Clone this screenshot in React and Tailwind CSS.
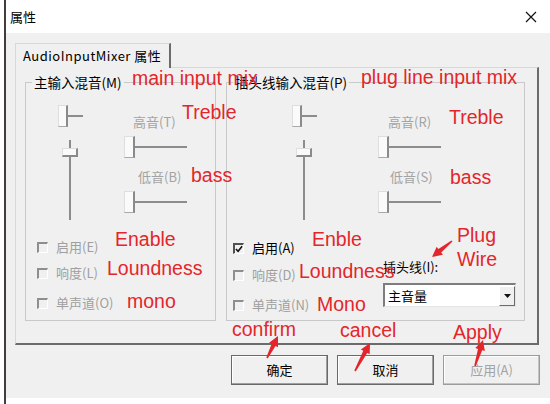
import React from 'react';

const ui = "font-['Noto_Sans_CJK_SC','Liberation_Sans',sans-serif] text-[13px] leading-4";

function SmallSlider() {
  return (
    <div className="flex items-center">
      <div className="w-[10px] h-[22px] bg-[#fafafa] border-l border-t border-[#dedede] border-b border-b-[#a8a8a8] border-r-2 border-r-[#8a8a8a]" />
      <div className="w-[15px] h-[2px] bg-[#8c8c8c]" />
    </div>
  );
}

function VSlider() {
  return (
    <div className="flex flex-col items-center w-[16px]">
      <div className="w-[2px] h-[8px] bg-[#8c8c8c]" />
      <div className="w-[16px] h-[9px] bg-[#fafafa] border-l border-t border-[#dedede] border-b-2 border-b-[#8a8a8a] border-r-2 border-r-[#8a8a8a]" />
      <div className="w-[2px] h-[63px] bg-[#8c8c8c]" />
    </div>
  );
}

function HSlider() {
  return (
    <div className="flex items-center">
      <div className="w-[11px] h-[22px] bg-[#fafafa] border-l border-t border-[#dedede] border-b border-b-[#a8a8a8] border-r-2 border-r-[#8a8a8a]" />
      <div className="w-[52px] h-[2px] bg-[#8c8c8c]" />
    </div>
  );
}

function Check({ label, checked, disabled, className }) {
  return (
    <div className={'flex items-center ' + (className || '')}>
      <div
        className={
          'w-[11px] h-[11px] flex items-center justify-center border-t-2 border-l-2 border-b border-r border-b-white border-r-white ' +
          (disabled ? 'border-t-[#8e8e8e] border-l-[#8e8e8e]' : 'border-t-[#505050] border-l-[#505050]')
        }
      >
        {checked && (
          <svg width="9" height="8" viewBox="0 0 9 8">
            <path d="M1 4 L3.5 6.5 L8 1" fill="none" stroke="#111" strokeWidth="1.8" />
          </svg>
        )}
      </div>
      <span className={'ml-[8px] ' + (disabled ? 'text-[#9f9f9f]' : 'text-black')}>{label}</span>
    </div>
  );
}

function arrow(x1, y1, x2, y2) {
  const dx = x2 - x1;
  const dy = y2 - y1;
  const len = Math.hypot(dx, dy);
  const ux = dx / len;
  const uy = dy / len;
  const nx = -uy;
  const ny = ux;
  const bx = x2 - ux * 10;
  const by = y2 - uy * 10;
  const p = [
    [x1 + nx * 0.8, y1 + ny * 0.8],
    [bx + nx * 2.2, by + ny * 2.2],
    [bx + nx * 5, by + ny * 5],
    [x2, y2],
    [bx - nx * 5, by - ny * 5],
    [bx - nx * 2.2, by - ny * 2.2],
    [x1 - nx * 0.8, y1 - ny * 0.8],
  ];
  return p.map((q) => q[0].toFixed(1) + ',' + q[1].toFixed(1)).join(' ');
}

const notes = [
  { t: 'main input mix', c: 'left-[132px] top-[69px]' },
  { t: 'plug line input mix', c: 'left-[361px] top-[68px]' },
  { t: 'Treble', c: 'left-[182px] top-[103px]' },
  { t: 'Treble', c: 'left-[449px] top-[108px]' },
  { t: 'bass', c: 'left-[191px] top-[166px]' },
  { t: 'bass', c: 'left-[450px] top-[168px]' },
  { t: 'Enable', c: 'left-[115px] top-[230px]' },
  { t: 'Enble', c: 'left-[312px] top-[230px]' },
  { t: 'Loundness', c: 'left-[107px] top-[259px]' },
  { t: 'Loundness', c: 'left-[299px] top-[262px]' },
  { t: 'mono', c: 'left-[127px] top-[292px]' },
  { t: 'Mono', c: 'left-[317px] top-[295px]' },
  { t: 'Plug', c: 'left-[457px] top-[226px]' },
  { t: 'Wire', c: 'left-[457px] top-[250px]' },
  { t: 'confirm', c: 'left-[232px] top-[320px]' },
  { t: 'cancel', c: 'left-[340px] top-[321px]' },
  { t: 'Apply', c: 'left-[453px] top-[323px]' },
];

export default function App() {
  return (
    <div className={'relative w-[550px] h-[404px] overflow-hidden bg-white flex ' + ui}>
      <div className="w-[4px] bg-white" />
      <div className="w-[2px] bg-[#443c3c]" />
      <div className="flex-1 flex flex-col">
        {/* title bar */}
        <div className="h-[33px] bg-white flex items-center justify-between pl-[4px] pr-[13px]">
          <span className="text-black">属性</span>
          <svg width="12" height="12" viewBox="0 0 12 12">
            <path d="M1 1 L11 11 M11 1 L1 11" stroke="#111" strokeWidth="1.2" />
          </svg>
        </div>

        <div className="h-[365px] bg-[#f0f0f0] flex flex-col">
          {/* tab */}
          <div className="mt-[10px] ml-[9px] relative z-10 -mb-px w-[156px] h-[25px] bg-[#f0f0f0] border-t border-l border-[#d8d8d8] border-r-2 border-r-[#6b6b6b] flex items-center pl-[7px] text-black tracking-[0.5px]">
            AudioInputMixer 属性
          </div>

          {/* tab page */}
          <div className="ml-[9px] w-[524px] h-[278px] border-t border-l border-[#d8d8d8] border-r-2 border-b-2 border-r-[#6b6b6b] border-b-[#6b6b6b] flex pt-[6px] pl-[9px] gap-[10px]">
            {/* group 1 */}
            <fieldset className="w-[191px] h-[247px] border border-[#c9c9c9]">
              <legend className="ml-[6px] px-[2px] text-black text-[13.5px]">主输入混音(M)</legend>
              <div className="flex h-[130px]">
                <div className="ml-[32px] flex flex-col w-[25px]">
                  <div className="mt-[15px]"><SmallSlider /></div>
                  <div className="mt-[13px] ml-[4px]"><VSlider /></div>
                </div>
                <div className="ml-[41px] flex flex-col">
                  <span className="mt-[24px] ml-[9px] text-[#a3a3a3]">高音(T)</span>
                  <div className="mt-[6px]"><HSlider /></div>
                  <span className="mt-[11px] ml-[14px] text-[#a3a3a3]">低音(B)</span>
                  <div className="mt-[6px]"><HSlider /></div>
                </div>
              </div>
              <div className="ml-[11px] mt-[19px] flex flex-col">
                <Check label="启用(E)" disabled />
                <Check label="响度(L)" disabled className="mt-[10px]" />
                <Check label="单声道(O)" disabled className="mt-[14px]" />
              </div>
            </fieldset>

            {/* group 2 */}
            <fieldset className="w-[299px] h-[247px] border border-[#c9c9c9]">
              <legend className="ml-[6px] px-[2px] text-black text-[13.5px]">插头线输入混音(P)</legend>
              <div className="flex h-[130px]">
                <div className="ml-[65px] flex flex-col w-[25px]">
                  <div className="mt-[15px]"><SmallSlider /></div>
                  <div className="mt-[13px] ml-[4px]"><VSlider /></div>
                </div>
                <div className="ml-[61px] flex flex-col">
                  <span className="mt-[24px] ml-[10px] text-[#a3a3a3]">高音(R)</span>
                  <div className="mt-[6px]"><HSlider /></div>
                  <span className="mt-[11px] ml-[12px] text-[#a3a3a3]">低音(S)</span>
                  <div className="mt-[6px]"><HSlider /></div>
                </div>
              </div>
              <div className="flex mt-[20px]">
                <div className="ml-[6px] w-[150px] flex flex-col">
                  <Check label="启用(A)" checked />
                  <Check label="响度(D)" disabled className="mt-[11px]" />
                  <Check label="单声道(N)" disabled className="mt-[14px]" />
                </div>
                <div className="flex flex-col">
                  <span className="mt-[19px] text-black">插头线(I):</span>
                  <div className="mt-[8px] w-[133px] h-[24px] bg-white border-t-2 border-l-2 border-[#7d7d7d] border-b border-r border-b-[#e4e4e4] border-r-[#e4e4e4] flex items-center justify-between">
                    <span className="pl-[3px] text-black">主音量</span>
                    <div className="w-[16px] h-[20px] bg-[#f0f0f0] border-t border-l border-white border-b border-r border-b-[#6b6b6b] border-r-[#6b6b6b] flex items-center justify-center">
                      <svg width="7" height="4" viewBox="0 0 7 4">
                        <path d="M0 0 L7 0 L3.5 4 Z" fill="#111" />
                      </svg>
                    </div>
                  </div>
                </div>
              </div>
            </fieldset>
          </div>

          {/* buttons */}
          <div className="mt-[10px] flex justify-end pr-[10px] gap-[9px]">
            <div className="w-[97px] h-[30px] border border-[#696969] bg-[#f0f0f0] shadow-[inset_-1px_-1px_0_#a0a0a0,inset_1px_1px_0_#ffffff] flex items-center justify-center text-black">确定</div>
            <div className="w-[97px] h-[30px] border border-[#696969] bg-[#f0f0f0] shadow-[inset_-1px_-1px_0_#a0a0a0,inset_1px_1px_0_#ffffff] flex items-center justify-center text-black">取消</div>
            <div className="w-[97px] h-[30px] border border-[#9c9c9c] bg-[#f0f0f0] shadow-[inset_-1px_-1px_0_#c4c4c4,inset_1px_1px_0_#ffffff] flex items-center justify-center text-[#a3a3a3]">应用(A)</div>
          </div>
        </div>
        <div className="flex-1 bg-white" />
      </div>

      {/* red annotations */}
      {notes.map((n, i) => (
        <span
          key={i}
          className={"absolute whitespace-nowrap font-['Liberation_Sans',sans-serif] text-[19.5px] leading-none text-[#e3262b] " + n.c}
        >
          {n.t}
        </span>
      ))}
      <svg className="absolute left-0 top-0" width="550" height="404" viewBox="0 0 550 404">
        <polygon points={arrow(452, 241, 432, 257)} fill="#e3262b" />
        <polygon points={arrow(267, 358, 278, 336)} fill="#e3262b" />
        <polygon points={arrow(355, 371, 370, 343)} fill="#e3262b" />
        <polygon points={arrow(475, 366, 483, 340)} fill="#e3262b" />
      </svg>
    </div>
  );
}
